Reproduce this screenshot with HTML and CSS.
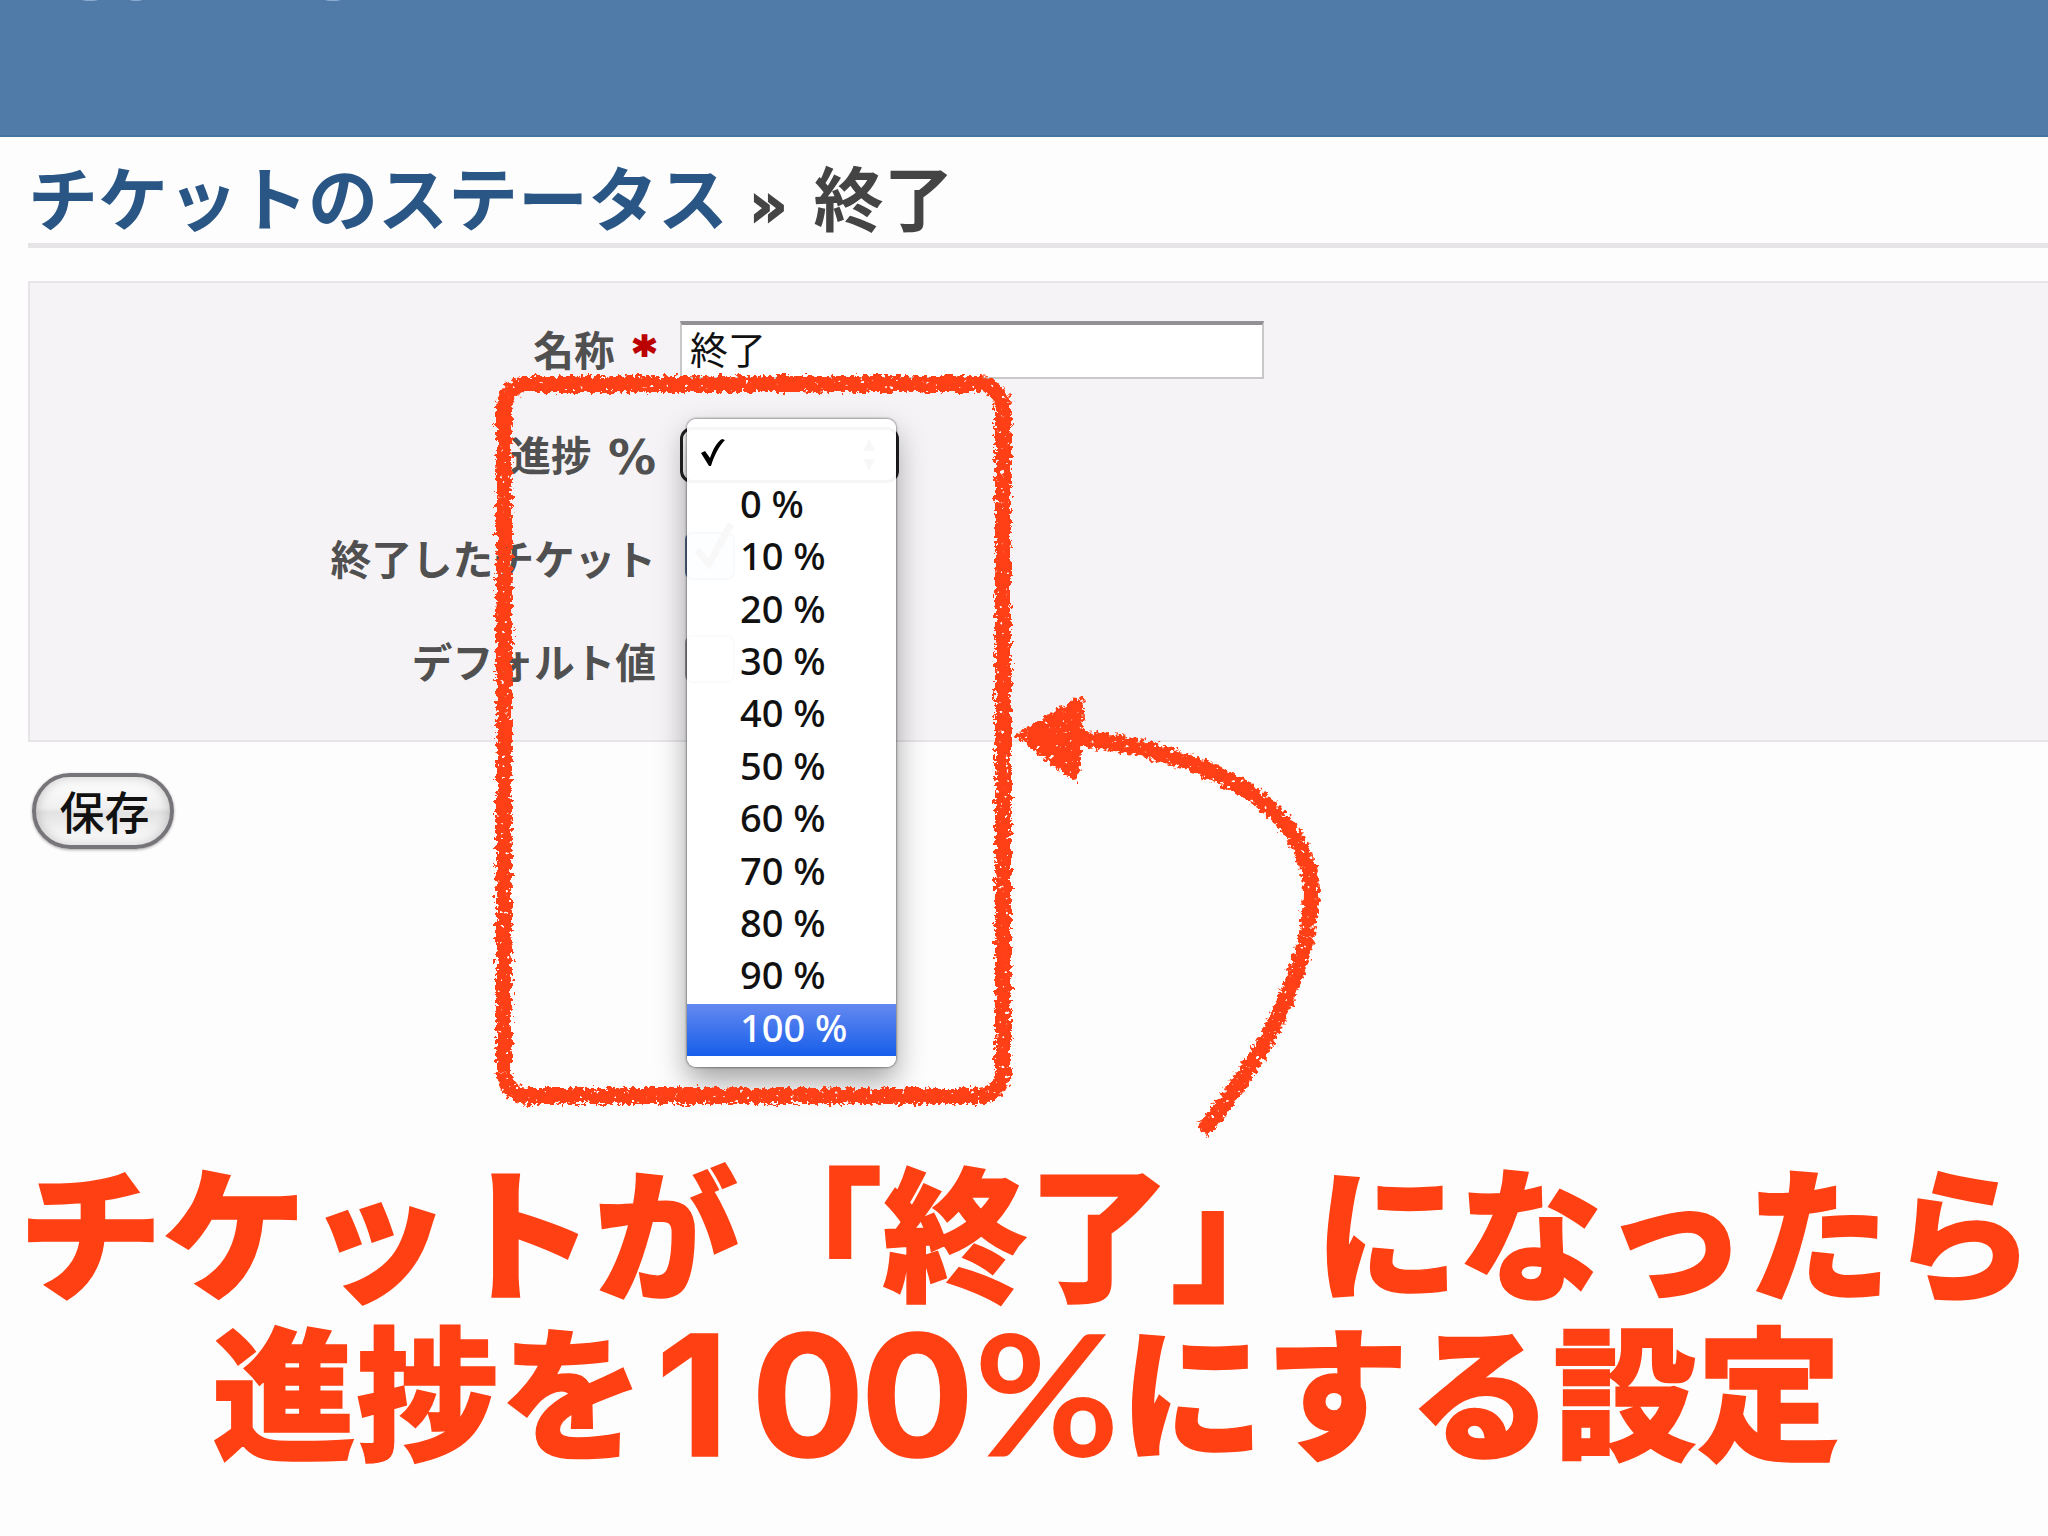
FILE: index.html
```html
<!DOCTYPE html>
<html lang="ja">
<head>
  <meta charset="UTF-8">
  <title>チケットのステータス » 終了</title>
  <link rel="stylesheet" href="styles.css">
</head>
<body>
  <header class="header">
    <svg class="header-marks" width="360" height="3" viewBox="0 0 360 3">
      <ellipse cx="90" cy="-1" rx="9" ry="2"/>
      <ellipse cx="136" cy="-1" rx="7" ry="2"/>
      <ellipse cx="333" cy="-1" rx="9" ry="2"/>
    </svg>
  </header>

  <main class="content">
    <h2 class="page-title"><a href="#">チケットのステータス</a> <span class="raquo">»</span> <span>終了</span></h2>

    <form>
      <div class="box">
        <div class="row">
          <label for="name">名称 <span class="required">*</span></label>
          <input class="name-input" id="name" type="text" value="終了">
        </div>
        <div class="row">
          <label>進捗 <span class="percent">%</span></label>
          <div class="select">
            <svg class="select-arrows" width="14" height="34" viewBox="0 0 14 34">
              <path d="M7 1L13 13H1ZM7 33L13 21H1Z"/>
            </svg>
            <ul class="menu">
              <li>
                <svg class="check" width="26" height="30" viewBox="0 0 26 30">
                  <path d="M1 15L5 13L10 20C13 11 17 4 22 1L25 2C19 8 14 18 11 28L9 28Z"/>
                </svg>
              </li>
              <li>0 %</li>
              <li>10 %</li>
              <li>20 %</li>
              <li>30 %</li>
              <li>40 %</li>
              <li>50 %</li>
              <li>60 %</li>
              <li>70 %</li>
              <li>80 %</li>
              <li>90 %</li>
              <li class="selected">100 %</li>
            </ul>
          </div>
        </div>
        <div class="row short">
          <label>終了したチケット</label>
          <div class="checkbox checked">
            <svg width="50" height="56" viewBox="0 0 50 56">
              <path d="M10 30L22 44L44 4" fill="none" stroke="#555" stroke-width="7"/>
            </svg>
          </div>
        </div>
        <div class="row short">
          <label>デフォルト値</label>
          <div class="checkbox"></div>
        </div>
      </div>
      <button class="save" type="button">保存</button>
    </form>
  </main>

  <p class="caption">
    <span class="line">チケットが「終了」になったら</span>
    <span class="line">進捗を<span class="digits"><span class="one">1</span><span class="zeros">00</span></span><span class="sign">%</span>にする設定</span>
  </p>

  <!-- crayon frame and arrow -->
  <svg class="marker" width="2048" height="1536" viewBox="0 0 2048 1536">
    <defs>
      <filter id="crayon" filterUnits="userSpaceOnUse" x="470" y="350" width="880" height="810">
        <feTurbulence type="fractalNoise" baseFrequency="0.22" numOctaves="3" seed="4" result="noise"/>
        <feDisplacementMap in="SourceGraphic" in2="noise" scale="11" xChannelSelector="R" yChannelSelector="G" result="rough"/>
        <feTurbulence type="fractalNoise" baseFrequency="0.2" numOctaves="2" seed="11"/>
        <feColorMatrix type="matrix" values="0 0 0 0 0  0 0 0 0 0  0 0 0 0 0  14 0 0 0 -10" result="holes"/>
        <feComposite in="rough" in2="holes" operator="out"/>
      </filter>
    </defs>
    <g filter="url(#crayon)">
      <rect class="stroke" x="504" y="384" width="499" height="712" rx="24"/>
      <path class="stroke" d="M1202 1132C1245 1080 1311 985 1311 892C1311 800 1190 748 1075 738"/>
      <path class="head" d="M1014 735L1078 697Q1085 698 1084 712L1079 778Q1076 784 1070 778Z"/>
    </g>
  </svg>
</body>
</html>
```

FILE: styles.css
```css
* {
  box-sizing: border-box;
}

body {
  margin: 0;
  width: 2048px;
  height: 1536px;
  overflow: hidden;
  position: relative;
  background: #fdfdfd;
  color: #484848;
  font-family: "Noto Sans", "Noto Sans CJK JP", sans-serif;
}

.header {
  height: 137px;
  background: #507aa8;
  border-bottom: 2px solid #44749f;
}

.header-marks {
  display: block;
  fill: #8cabd0;
}

.content {
  padding-left: 28px;
}

.page-title {
  margin: 0;
  height: 111px;
  padding-top: 9px;
  border-bottom: 5px solid #e6e4e7;
  color: #444;
  font-family: "Noto Sans CJK JP", sans-serif;
  font-size: 70px;
  font-weight: 700;
  line-height: 100px;
  white-space: nowrap;
}

.page-title a {
  color: #2a5685;
  text-decoration: none;
}

.page-title .raquo {
  margin: 0 10px 0 5px;
  font-family: "DejaVu Sans", sans-serif;
  font-size: 60px;
  line-height: 0;
  -webkit-text-stroke: 1.5px #444;
}

.box {
  height: 461px;
  margin-top: 33px;
  padding-top: 14px;
  background: #f5f3f6;
  border: 2px solid #e6e4e7;
  border-right: 0;
}

.row {
  display: grid;
  grid-template-columns: 626px auto;
  column-gap: 24px;
  align-items: center;
  justify-content: start;
  height: 105px;
}

.short {
  height: 103px;
}

.row label {
  padding-bottom: 2px;
  color: #505050;
  font-family: "Noto Sans CJK JP", sans-serif;
  font-size: 40.7px;
  font-weight: 700;
  line-height: 60px;
  text-align: right;
  white-space: nowrap;
}

.required {
  margin-left: 9px;
  color: #b00;
  font-family: "DejaVu Sans", sans-serif;
  font-size: 44px;
  line-height: 0;
  vertical-align: -2px;
  -webkit-text-stroke: 2px #b00;
}

.percent {
  margin-left: 7px;
  font-family: "DejaVu Sans", sans-serif;
  font-size: 48px;
  line-height: 0;
  vertical-align: -3px;
}

.name-input {
  width: 584px;
  height: 58px;
  margin: 0;
  padding: 0 0 7px 8px;
  border: 2px solid #c8c8c8;
  border-top: 4px solid #929094;
  background: #fff;
  color: #111;
  font-family: "Noto Sans CJK JP", sans-serif;
  font-size: 38px;
}

.select {
  position: relative;
  display: flex;
  align-items: center;
  justify-content: flex-end;
  width: 219px;
  height: 56px;
  padding-right: 20px;
  border: 3px solid #222;
  border-radius: 12px;
  background: #fff;
}

.select-arrows {
  fill: #333;
}

.menu {
  position: absolute;
  top: -11px;
  left: 4px;
  width: 209px;
  height: 648px;
  margin: 0;
  padding: 9px 0 0;
  list-style: none;
  background: rgba(255, 255, 255, 0.96);
  border-radius: 9px;
  box-shadow: 0 0 2px 1px rgba(0, 0, 0, 0.35), 0 14px 30px rgba(0, 0, 0, 0.36);
  color: #111;
  font-size: 38px;
  font-weight: 500;
  z-index: 1;
}

.menu li {
  height: 52.4px;
  padding-left: 53px;
  line-height: 47px;
  white-space: nowrap;
}

.menu li:first-child {
  padding: 10px 0 0 13px;
  line-height: 0;
}

.menu .selected {
  background: linear-gradient(#6489f0, #165eea);
  color: #fff;
}

.checkbox {
  width: 50px;
  height: 48px;
  margin: -6px 0 0 5px;
  border: 2px solid #999;
  border-radius: 8px;
  background: #fff;
}

.checked {
  background: #c5e0ee;
  border-color: #5a6d95;
}

.checked svg {
  display: block;
  margin-top: -14px;
}

.save {
  display: block;
  width: 142px;
  height: 76px;
  margin: 31px 0 0 4px;
  padding: 0 0 1px 3px;
  border: 4px solid #77757a;
  border-radius: 38px;
  background: linear-gradient(#fff 0%, #f0f0f0 45%, #e2e2e2 52%, #fff 100%);
  box-shadow: 0 1px 3px rgba(0, 0, 0, 0.35), inset 0 0 12px rgba(0, 0, 0, 0.22);
  color: #111;
  font-family: "Noto Sans CJK JP", sans-serif;
  font-size: 45px;
  font-weight: 500;
  line-height: 64px;
}

.caption {
  margin: 299px 0 0;
  padding-left: 5px;
  color: #ff4013;
  font-family: "Noto Sans CJK JP", sans-serif;
  font-size: 144px;
  font-weight: 900;
  line-height: 159px;
  text-align: center;
  -webkit-text-stroke: 1.5px #ff4013;
}

.caption .line {
  display: block;
  height: 159px;
  white-space: nowrap;
}

.digits {
  margin-left: 12px;
  font-family: Inter, sans-serif;
  font-size: 168px;
  font-weight: 700;
  line-height: 0;
  vertical-align: -7px;
}

.one {
  margin-right: 23px;
}

.zeros {
  letter-spacing: -4px;
}

.sign {
  display: inline-block;
  margin: 0 4px 0 8px;
  font-family: Lato, sans-serif;
  font-size: 168px;
  font-weight: 700;
  line-height: 0;
  vertical-align: -7px;
  transform: scaleX(1.06);
  -webkit-text-stroke: 0;
}

.marker {
  position: absolute;
  top: 0;
  left: 0;
  pointer-events: none;
  z-index: 2;
}

.marker .stroke {
  fill: none;
  stroke: #ff4013;
  stroke-width: 16;
}

.marker .head {
  fill: #ff4013;
}
```
